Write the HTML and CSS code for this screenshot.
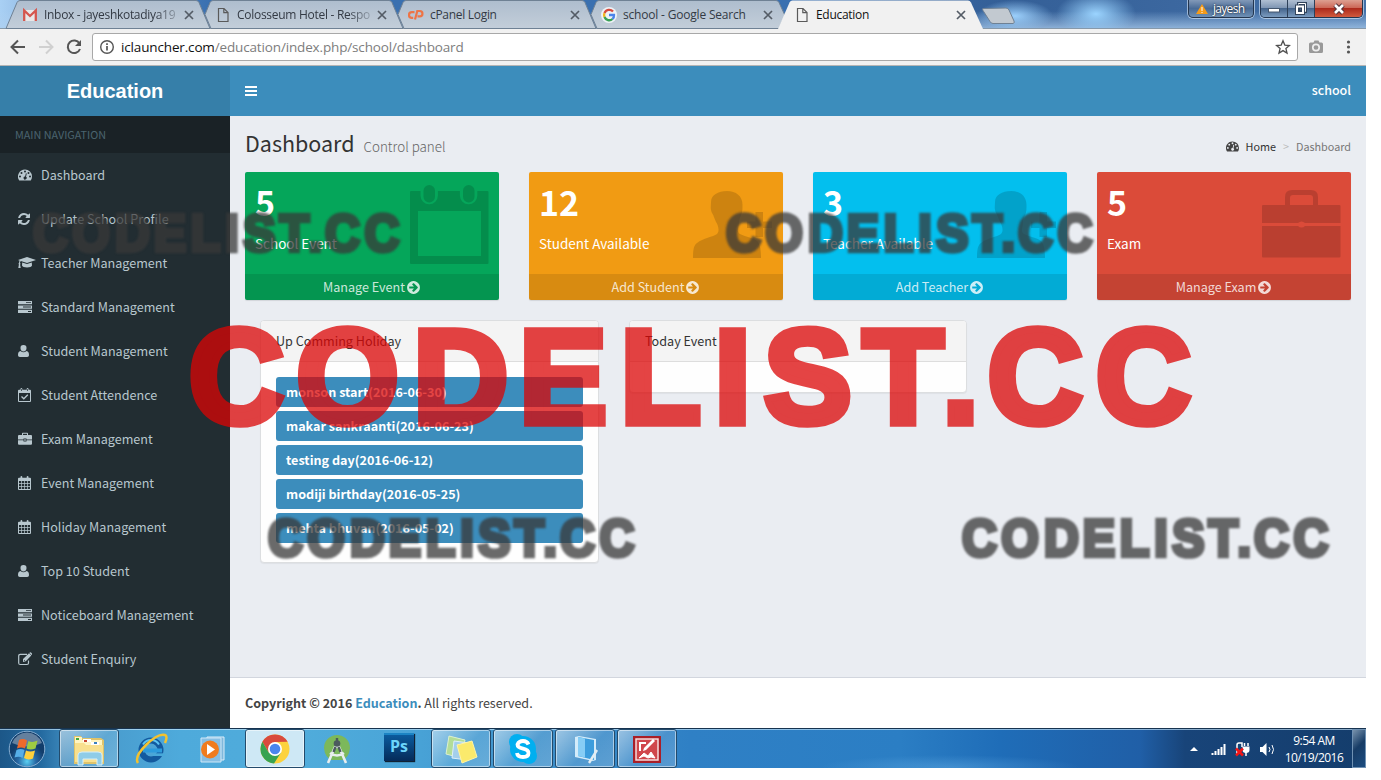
FILE: index.html
```html
<!DOCTYPE html>
<html lang="en">
<head>
<meta charset="utf-8">
<title>Education</title>
<link rel="stylesheet" href="styles.css">
</head>
<body>
<svg class="defs" width="0" height="0">
  <symbol id="gauge" viewBox="0 0 14 14"><path fill-rule="evenodd" d="M7 1.500a7 7 0 0 1 7 7c0 1.500-.4 2.700-1.100 3.800-.1.200-.3.200-.5.200H1.600c-.2 0-.4 0-.5-.2A7 7 0 0 1 7 1.500zM2 7.500a1 1 0 1 0 0 2 1 1 0 0 0 0-2zM3.500 4a1 1 0 1 0 0 2 1 1 0 0 0 0-2zM7 2.500a1 1 0 1 0 0 2 1 1 0 0 0 0-2zM10.500 4a1 1 0 1 0 0 2 1 1 0 0 0 0-2zM12 7.500a1 1 0 1 0 0 2 1 1 0 0 0 0-2zM7.900 5.200 7.100 8.500a1.500 1.500 0 1 0 .9.300l.8-3.300z"/></symbol>
  <symbol id="refresh" viewBox="0 0 1792 1792"><path d="M1639 1056q0 5-1 7-64 268-268 434.500t-478 166.500q-146 0-282.500-55t-243.500-157l-129 129q-19 19-45 19t-45-19-19-45v-448q0-26 19-45t45-19h448q26 0 45 19t19 45-19 45l-137 137q71 66 161 102t187 36q134 0 250-65t186-179q11-17 53-117 8-23 30-23h192q13 0 22.500 9.500t9.500 22.500zm25-800v448q0 26-19 45t-45 19h-448q-26 0-45-19t-19-45 19-45l138-138q-148-137-349-137-134 0-250 65t-186 179q-11 17-53 117-8 23-30 23h-199q-13 0-22.500-9.500t-9.500-22.500v-7q65-268 270-434.500t480-166.500q146 0 284 55.500t245 156.500l130-129q19-19 45-19t45 19 19 45z"/></symbol>
  <symbol id="cap" viewBox="0 0 18 14"><path d="M9 1 18 4 9 7 2.800 5C2.200 5.500 2 6.200 2 7c.8.500.6 1.300.1 1.600L2.700 12H.3l.6-3.400C.4 8.100.4 7.500 1 7.100c0-1 .2-1.800.7-2.400L0 4zM4.200 6.500 9 8.100l4.800-1.600.2 3c0 2.500-9.800 2.500-10 0z"/></symbol>
  <symbol id="server" viewBox="0 0 14 14"><path fill-rule="evenodd" d="M0 1h14v3.300H0zM0 5.400h14v3.300H0zM0 9.800h14v3.300H0zM8 2.200v.9h5v-.9zM5 6.600v.9h8v-.9zM10 11v.9h3V11z"/></symbol>
  <symbol id="user" viewBox="0 0 14 14"><path d="M5.500 1a3 3 0 0 1 3 3.200c0 1.800-1.100 3.300-3 3.300s-3-1.500-3-3.300A3 3 0 0 1 5.500 1zM2.500 7a4.500 4.500 0 0 0 6 0c1.800.2 2.500 2 2.500 4 0 1.200-.7 2-1.800 2H1.800C.7 13 0 12.200 0 11c0-2 .7-3.800 2.500-4z"/></symbol>
  <symbol id="calcheck" viewBox="0 0 14 14"><path fill-rule="evenodd" d="M1 1.800h1.500V1q0-.9.900-.9t.9.900v.8h4.400V1q0-.9.900-.9t.9.900v.8H12q1 0 1 1V13q0 1-1 1H1q-1 0-1-1V2.800q0-1 1-1zM1 5v8h11V5zM3.100 1v2.100h.7V1zM9.200 1v2.100h.7V1z"/><path d="m3.500 8.500 2.300 2.300 4-4" fill="none" stroke="currentColor" stroke-width="1.300"/></symbol>
  <symbol id="calendar" viewBox="0 0 14 14"><path fill-rule="evenodd" d="M1 1.800h1.500V1q0-.9.900-.9t.9.900v.8h4.400V1q0-.9.900-.9t.9.900v.8H12q1 0 1 1V13q0 1-1 1H1q-1 0-1-1V2.800q0-1 1-1zM1 5v2h2.200V5zm2.900 0v2h2.200V5zm2.900 0v2H9V5zm2.900 0v2H12V5zM1 7.700v2.300h2.200V7.700zm2.900 0v2.300h2.200V7.700zm2.900 0v2.300H9V7.700zm2.900 0v2.300H12V7.700zM1 10.800V13h2.200v-2.200zm2.900 0V13h2.200v-2.200zm2.900 0V13H9v-2.200zm2.900 0V13H12v-2.200z"/></symbol>
  <symbol id="case" viewBox="0 0 14 14"><path fill-rule="evenodd" d="M4 3V1.500q0-.8.800-.8h4.400q.8 0 .8.800V3h3q1 0 1 1v3.500H8.500v-1h-3v1H0V4q0-1 1-1zm1 0h4V1.700H5zM0 8.200h5.500v1.300h3V8.200H14v3.600q0 1-1 1H1q-1 0-1-1zM6.300 7.300h1.400v1.400H6.300z"/></symbol>
  <symbol id="edit" viewBox="0 0 14 14"><path d="M10.500 8.500V11q0 1.500-1.500 1.500H2.300Q.7 12.500.7 11V4Q.7 2.300 2.300 2.300H9" fill="none" stroke="currentColor" stroke-width="1.200"/><path fill-rule="evenodd" d="m11 1.200 2.300 2.300-5.500 5.700L5 10V7zm.8-.7q.6-.6 1.200 0l1 1q.6.600 0 1.200l-.4.400-2.200-2.200zM6 7.700V9h1.200z"/></symbol>
  <symbol id="go" viewBox="0 0 1792 1792"><path d="M1413 896q0-27-18-45l-91-91-362-362q-18-18-45-18t-45 18l-91 91q-18 18-18 45t18 45l189 189h-502q-26 0-45 19t-19 45v128q0 26 19 45t45 19h502l-189 189q-19 19-19 45t19 45l91 91q18 18 45 18t45-18l362-362 91-91q18-18 18-45zm251 0q0 209-103 385.500t-279.500 279.500-385.500 103-385.500-103-279.500-279.500-103-385.500 103-385.500 279.500-279.500 385.500-103 385.500 103 279.500 279.500 103 385.500z"/></symbol>
  <symbol id="close" viewBox="0 0 10 10"><path d="m1 1 8 8M9 1 1 9" stroke="currentColor" stroke-width="1.700" fill="none"/></symbol>
  <symbol id="page" viewBox="0 0 12 16"><path d="M1.500 1.500h5.500l4 4v9H1.500zM6.800 1.500v4.200H11" fill="none" stroke="#5a5a5a" stroke-width="1.200"/></symbol>
  <symbol id="personadd" viewBox="0 0 80 80"><path d="M34 7c9 0 15.500 5 15.500 14 0 4 0 6-1 9-1 3-2.500 5-2.500 8 0 6-3 9 1 12 6 3 14 4 17 7 3 3 4 8 4 17H0c0-9 1-13 4-15 6-5 16-6 20-9 3-3 1-9-1-12-2-4-2-6-4-9-2-5-1-7-1-11 0-7 7-11 16-11z"/><path d="M62.500 28h7.500v9.500h9V44h-9v9h-7.500v-9H54v-6.500h8.500z"/></symbol>
  <symbol id="word" viewBox="0 0 1010 110" overflow="visible"><text y="101" x="187.300 294.700 411.300 517.300 618.300 712.300 761.700 860.700 940 985.300 1093.300" transform="translate(-190 0)">CODELIST.CC</text></symbol>
  <linearGradient id="tabg" x2="0" y2="1"><stop stop-color="#aebdce"/><stop offset="1" stop-color="#c3ced9"/></linearGradient>
</svg>

<div class="screen">
  <div class="titlebar">
    <svg class="tabshapes" width="1030" height="29" viewBox="0 0 1030 29">
      <g fill="url(#tabg)" stroke="#6f8194">
        <path d="M6 28.500 17 2.500q1-2 3-2h176q2 0 3 2l11 26z"/>
        <path d="m211 28.500-6-14 5-12q1-2 3-2h176q2 0 3 2l11 26z"/>
        <path d="m404 28.500-6-14 5-12q1-2 3-2h176q2 0 3 2l11 26z"/>
        <path d="m597 28.500-6-14 5-12q1-2 3-2h177q2 0 3 2l6 13-6 13z"/>
        <path d="m983 8.500 23-.5q2 0 3 2l5 11q1 2-1 2.500h-20q-2 0-3-2l-7-11q-1-2 0-2z" fill="#c2c9d0"/>
      </g>
      <path d="M778 29 789.500 2.500q1-2 3-2H968q2 0 3 2L983 29z" fill="#f1f1f1"/>
    </svg>
    <div class="tabs">
      <div class="tab"><svg class="fav" viewBox="0 0 16 16"><path d="M2 3h12v11H2z" fill="#e8e8e8"/><path d="M2.200 14V3.500L8 9l5.800-5.500V14" fill="none" stroke="#d5564e" stroke-width="2.300"/></svg><span class="tname t1">Inbox - jayeshkotadiya19</span><svg class="x"><use href="#close"/></svg></div>
      <div class="tab"><svg class="fav"><use href="#page"/></svg><span class="tname t2">Colosseum Hotel - Respo</span><svg class="x"><use href="#close"/></svg></div>
      <div class="tab"><svg class="fav" viewBox="0 0 16 16"><path d="M6.500 5.200H3.800a2.700 2.700 0 0 0 0 5.600h1.400M7 12.500 9.300 4h2.500a2.600 2.600 0 0 1 0 5.300H9.500" fill="none" stroke="#ee7446" stroke-width="2.200"/></svg><span class="tname t3">cPanel Login</span><svg class="x"><use href="#close"/></svg></div>
      <div class="tab"><svg class="fav" viewBox="0 0 16 16"><circle cx="8" cy="8" r="8" fill="#eef2f6"/><g fill="none" stroke-width="2.300"><path d="M12 4.600A5 5 0 0 0 3.500 6" stroke="#d64b3e"/><path d="M3.500 6a5 5 0 0 0 0 4" stroke="#efb61f"/><path d="M3.500 10a5 5 0 0 0 8 2" stroke="#38a156"/><path d="M11.500 12A5 5 0 0 0 13 8H8" stroke="#4a83ea"/></g></svg><span class="tname t4">school - Google Search</span><svg class="x"><use href="#close"/></svg></div>
      <div class="tab"><svg class="fav"><use href="#page"/></svg><span class="tname t5">Education</span><svg class="x"><use href="#close"/></svg></div>
    </div>
    <div class="winbtns">
      <div class="profile"><svg width="12" height="12" viewBox="0 0 12 12"><path d="M6 1 12 11H0z" fill="#f69b18"/><path d="M6 4v4M6 9v1" stroke="#fff"/></svg><span>jayesh</span></div>
      <div class="ctl">
        <div class="cb"><svg width="14" height="14"><rect x="1.500" y="6.500" width="11" height="3.500" fill="#fff" stroke="#44566e"/></svg></div>
        <div class="cb"><svg width="14" height="14" fill="none"><path d="M4.500 1.500h7v8h-7z" stroke="#33455c" stroke-width="3"/><path d="M4.500 1.500h7v8h-7z" stroke="#fff"/><path d="M3 4.500h6v6.500H3z" stroke="#33455c" stroke-width="4"/><path d="M3 4.500h6v6.500H3z" stroke="#fff" stroke-width="2"/></svg></div>
        <div class="cb red"><svg width="14" height="14" viewBox="0 0 14 14"><path d="m3 3 8 8M11 3l-8 8" stroke="#51333b" stroke-width="4.600"/><path d="m3 3 8 8M11 3l-8 8" stroke="#fff" stroke-width="2.600"/></svg></div>
      </div>
    </div>
  </div>

  <div class="toolbar">
    <svg class="navicons" width="92" height="36" fill="none" stroke-width="2"><path d="M25 18H12M18 11.500 11.500 18l6.500 6.500" stroke="#555"/><path d="M39 18h13M46 11.500l6.500 6.500-6.500 6.500" stroke="#d0d0d0"/><path d="M79.500 14.500A6.300 6.300 0 1 0 80 20" stroke="#555"/><path d="M81 11v6h-6z" fill="#555"/></svg>
    <div class="omni">
      <svg width="16" height="16" viewBox="0 0 16 16"><circle cx="8" cy="8" r="6.300" fill="none" stroke="#555" stroke-width="1.400"/><path d="M8 7v4.500M8 4.300v1.600" stroke="#555" stroke-width="1.700"/></svg>
      <span class="url"><b>iclauncher.com</b>/education/index.php/school/dashboard</span>
      <svg class="star" width="16" height="16" viewBox="0 0 16 16"><path d="m8 1.800 1.800 4.300 4.600.4-3.500 3 1.100 4.600L8 11.600l-4 2.500 1.100-4.600-3.500-3 4.600-.4z" fill="none" stroke="#505050" stroke-width="1.300"/></svg>
    </div>
    <svg class="right" width="68" height="36"><path d="M12.500 13.500h3l1-2h4l1 2h2q1.500 0 1.500 1.500v7.500q0 1.500-1.500 1.500h-11Q11 24 11 22.500V15q0-1.500 1.500-1.500z" fill="#999"/><circle cx="18" cy="18.500" r="3.200" fill="none" stroke="#eee" stroke-width="1.700"/><g fill="#555"><circle cx="50.500" cy="13" r="1.600"/><circle cx="50.500" cy="18" r="1.600"/><circle cx="50.500" cy="23" r="1.600"/></g></svg>
  </div>

  <div class="app">
    <aside class="side">
      <div class="logo">Education</div>
      <div class="navhead">MAIN NAVIGATION</div>
      <div class="item"><svg><use href="#gauge"/></svg>Dashboard</div>
      <div class="item"><svg class="sm"><use href="#refresh"/></svg>Update School Profile</div>
      <div class="item"><svg class="wide"><use href="#cap"/></svg>Teacher Management</div>
      <div class="item"><svg><use href="#server"/></svg>Standard Management</div>
      <div class="item"><svg><use href="#user"/></svg>Student Management</div>
      <div class="item"><svg><use href="#calcheck"/></svg>Student Attendence</div>
      <div class="item"><svg><use href="#case"/></svg>Exam Management</div>
      <div class="item"><svg><use href="#calendar"/></svg>Event Management</div>
      <div class="item"><svg><use href="#calendar"/></svg>Holiday Management</div>
      <div class="item"><svg><use href="#user"/></svg>Top 10 Student</div>
      <div class="item"><svg><use href="#server"/></svg>Noticeboard Management</div>
      <div class="item"><svg><use href="#edit"/></svg>Student Enquiry</div>
    </aside>
    <main class="main">
      <header class="navbar"><svg width="12" height="12"><path d="M0 2h12M0 6h12M0 10h12" stroke="#fff" stroke-width="2"/></svg><span>school</span></header>
      <section class="content">
        <div class="heading">
          <div><span class="h1">Dashboard</span><span class="sub">Control panel</span></div>
          <div class="crumbs"><svg width="13" height="13"><use href="#gauge"/></svg><span class="home">Home</span><span class="sep">&gt;</span><span class="here">Dashboard</span></div>
        </div>
        <div class="boxes">
          <div class="box green"><div class="inner"><div class="num">5</div><div class="lbl">School Event</div></div>
            <svg class="big" width="80" height="80" viewBox="0 0 80 80"><path fill-rule="evenodd" d="M2 7h9.500v4.500a8.700 8.700 0 0 0 17.400 0V7h22v4.500a8.700 8.700 0 0 0 17.400 0V7H78.500q1 0 1 1v71q0 1-1 1H2q-1 0-1-1V8q0-1 1-1zM9 27v45h63V27z"/><rect x="14.500" y="1" width="11.500" height="17.500" rx="5.700"/><rect x="54" y="1" width="11.500" height="17.500" rx="5.700"/></svg>
            <div class="foot">Manage Event <svg><use href="#go"/></svg></div></div>
          <div class="box orange"><div class="inner"><div class="num">12</div><div class="lbl">Student Available</div></div>
            <svg class="big" width="80" height="80"><use href="#personadd"/></svg>
            <div class="foot">Add Student <svg><use href="#go"/></svg></div></div>
          <div class="box aqua"><div class="inner"><div class="num">3</div><div class="lbl">Teacher Available</div></div>
            <svg class="big" width="80" height="80"><use href="#personadd"/></svg>
            <div class="foot">Add Teacher <svg><use href="#go"/></svg></div></div>
          <div class="box redbox"><div class="inner"><div class="num">5</div><div class="lbl">Exam</div></div>
            <svg class="big" width="80" height="80"><path fill-rule="evenodd" d="M24 21v-8q0-7 7-7h19q7 0 7 7v8h21.500q1 0 1 1v17H44q-3.500-3-7 0H1V22q0-1 1-1zm5 0h23v-7q0-3-3-3H32q-3 0-3 3zM1 42h36q3.500 3 7 0h35.500v30.500q0 1-1 1H2q-1 0-1-1z"/></svg>
            <div class="foot">Manage Exam <svg><use href="#go"/></svg></div></div>
        </div>
        <div class="panels">
          <div class="panel"><div class="phead">Up Comming Holiday</div>
            <div class="pbody"><div class="ev">monson start(2016-06-30)</div><div class="ev">makar sankraanti(2016-06-23)</div><div class="ev">testing day(2016-06-12)</div><div class="ev">modiji birthday(2016-05-25)</div><div class="ev">mehta bhuvan(2016-05-02)</div></div></div>
          <div class="panel p2"><div class="phead">Today Event</div><div class="pbody"></div></div>
        </div>
      </section>
      <footer class="footer"><b>Copyright © 2016 <i>Education</i>.</b> All rights reserved.</footer>
    </main>
  </div>

  <div class="taskbar">
    <div class="start"><svg width="40" height="40" viewBox="0 0 40 40"><defs><radialGradient id="orb" cy=".85"><stop stop-color="#5bd0f2"/><stop offset=".5" stop-color="#2769a5"/><stop offset="1" stop-color="#123d6b"/></radialGradient></defs><circle cx="20" cy="20" r="17.800" fill="url(#orb)" stroke="#86add0"/><path d="M5 14a16 16 0 0 1 30 0q-15 7-30 0z" fill="#fff" opacity=".35"/><path d="M12 11q4-2 8 .5l-2 8q-4-2-8 0z" fill="#ef6a2c"/><path d="M21.500 12q4 2 9-.5l-2 8q-5 2-9 0z" fill="#9dcc42"/><path d="M9.500 21q4-2 8 0l-2 8q-3-2-8-.5z" fill="#56aee8"/><path d="M19 21.500q4 2 9 0l-2 8q-5 2-9-.5z" fill="#ffd03c"/></svg></div>
    <div class="task on"><svg width="36" height="36" viewBox="0 0 36 36"><path d="M3 5h7l1 2h19l3 2v24H3z" fill="#dfc36a"/><path d="M4 6h7v3h20v9H4z" fill="#fff5c3"/><path d="M12 8h8v3h-8zM20 11h8v3h-8z" fill="#fff"/><path d="M5 7h3v2H5z" fill="#3fa93d"/><path d="M13 9h3v2h-3z" fill="#c94831"/><path d="M23 11h3v2h-3z" fill="#3b80bd"/><path d="M4 12h9l2 2h17v17H4z" fill="#f8e08e"/><path d="M7 34V24q0-3 4-3h16q4 0 4 3v10h-5v-6H12v6z" fill="#8fcce8" stroke="#d5eefa"/></svg></div>
    <div class="task"><svg width="36" height="36" viewBox="0 0 36 36"><circle cx="18" cy="19" r="9.500" fill="none" stroke="#135a9f" stroke-width="6"/><path d="M10 13.500a9.500 9.500 0 0 1 16 0" fill="none" stroke="#5cc4f2" stroke-width="2"/><path d="M10 19.500h19" stroke="#2c9bdc" stroke-width="4"/><path d="M20 22.300h12v2.700H20z" fill="#48a8d9"/><path d="M5 32Q1 26 13 14T32 4q3 1 0 8" fill="none" stroke="#f2c230" stroke-width="2.500"/></svg></div>
    <div class="task"><svg width="36" height="36" viewBox="0 0 36 36"><path d="M12 6h17v23H12z" fill="#7fb8dc" stroke="#dceefa"/><path d="M6 7h20v24H6z" fill="#86bfe4" stroke="#cfe8f8"/><circle cx="15" cy="18.500" r="9" fill="#f07c1e"/><path d="m12 13 8 5.500-8 5.500z" fill="#fff"/></svg></div>
    <div class="task on hot"><svg width="36" height="36" viewBox="0 0 36 36"><circle cx="18" cy="18" r="14.500" fill="#fcd23d"/><path d="M5.400 10.800A14.500 14.500 0 0 1 30.600 10.800L18 11 11.700 21.500z" fill="#d94b3d"/><path d="M5.400 10.800A14.500 14.500 0 0 0 17 32.500l7-11h-12.300z" fill="#37a351"/><circle cx="18" cy="18" r="7" fill="#fff"/><circle cx="18" cy="18" r="5.300" fill="#4a86ef"/></svg></div>
    <div class="task"><svg width="36" height="36" viewBox="0 0 36 36"><path d="M5 17a13 13 0 0 1 26 0q-1 10-8 12H13Q6 27 5 17z" fill="#7cb85b"/><path d="m9 32 7-16h4l7 16M11 22q7 5 14 0" fill="none" stroke="#e9eeee" stroke-width="2.600"/><circle cx="18" cy="12.500" r="3.300" fill="#4c5a5e"/><path d="M18 7v4M16.500 16l-2 5M19.500 16l2 5" stroke="#4c5a5e" stroke-width="2.400"/></svg></div>
    <div class="task"><div class="ps">Ps</div></div>
    <div class="task on"><svg width="36" height="36" viewBox="0 0 36 36"><path d="m6 5 16 4-4 18L3 23z" fill="#b3dd98" stroke="#ddf1cf"/><path d="m11 10 15 2-2 17-15-2z" fill="#a4cfeb" stroke="#dcf0fa"/><path d="m14 14 15-4 5 16-15 6z" fill="#fbea6c" stroke="#fff4a6"/></svg></div>
    <div class="task on"><svg width="36" height="36" viewBox="0 0 36 36"><circle cx="18" cy="18" r="13" fill="#00aff0"/><circle cx="12" cy="11" r="8" fill="#00aff0"/><circle cx="24" cy="25" r="8" fill="#00aff0"/><path d="M23.500 13.500Q22 10 18 10t-5.500 3.500q0 3 5.500 4.200t5.500 4.300q0 4-5.500 4t-6-4" fill="none" stroke="#fff" stroke-width="3.800"/></svg></div>
    <div class="task on"><svg width="36" height="36" viewBox="0 0 36 36"><path d="m8 6 4-1 17 3v21l-3 1-18-4z" fill="#d4ecfa"/><path d="m11 6 16 3v20l-16-4z" fill="#3c9ddd"/><path d="m11 6 7 1.500v19L11 25z" fill="#86cdf5"/><path d="m30 19-8 13" stroke="#e3edf3" stroke-width="2.400"/></svg></div>
    <div class="task on"><svg width="36" height="36" viewBox="0 0 36 36"><path d="M4 5h28v27H4z" fill="#a91f28"/><path d="M7 8h22v21H7z" fill="#d0474c" stroke="#f5dcdc" stroke-width="1.500"/><path d="m26 10-9 9-3 1 1-3 9-9z" fill="#fff"/><path d="M10 11h7v2h-5v7h-2z" fill="#fff"/><path d="m10 27 5-5 4 3 3-4 4 6-4-1-3 1-4-2z" fill="#fff" stroke="#fff"/></svg></div>
    <div class="tray">
      <svg width="92" height="40" viewBox="0 0 92 40"><path d="m4 22 4-4 4 4z" fill="#fff"/><path d="M26.500 24v2M29.500 22v4M32.500 20v6M35.500 18v8M38.500 15v11" stroke="#fff" stroke-width="2"/><path d="M51 25V16q0-2 2-2h3v4" fill="none" stroke="#fff" stroke-width="1.500"/><path d="M56.500 17.500h7v3.500q0 3-3.500 3t-3.500-3z" fill="#fff"/><path d="M58.500 17v-3M62 17v-3M60 23v4" stroke="#fff" stroke-width="1.500"/><path d="m50 19.500 7 7m0-7-7 7" stroke="#f31414" stroke-width="2.500"/><path d="M74 18h2.500l4-4v13l-4-4H74z" fill="#fff"/><path d="M83 18q2 2.500 0 5M86 16q3 4.500 0 9" fill="none" stroke="#fff"/></svg>
      <div class="clock"><span>9:54 AM</span><span class="date">10/19/2016</span></div>
      <div class="peek"></div>
    </div>
  </div>

  <svg class="marks" width="1381" height="780">
    <g class="mgrey">
      <use href="#word" width="1010" height="110" transform="translate(34 212) scale(.366 .39)"/>
      <use href="#word" width="1010" height="110" transform="translate(727 212) scale(.366 .39)"/>
      <use href="#word" width="1010" height="110" transform="translate(269 516) scale(.366 .395)"/>
      <use href="#word" width="1010" height="110" transform="translate(963 516) scale(.366 .395)"/>
    </g>
    <g class="mred"><use href="#word" width="1010" height="110" transform="translate(191.500 321.500) scale(1.001 1.005)"/></g>
  </svg>
</div>
</body>
</html>
```
FILE: styles.css
```css
* { box-sizing: border-box; }
body { margin: 0; background: #fff; width: 1381px; height: 780px; overflow: hidden; font-family: "Noto Sans CJK SC", "Noto Sans", sans-serif; font-size: 12.6px; color: #333; }
.defs { position: absolute; }
svg { flex: none; }
.screen { position: relative; width: 1366px; height: 768px; display: flex; flex-direction: column; }

.titlebar { position: relative; height: 29px; flex: none; display: flex; justify-content: space-between; border-bottom: 1px solid #8799aa; background: radial-gradient(ellipse 38px 16px at 1015px 16px, #9bcffb, transparent), radial-gradient(ellipse 40px 22px at 1096px 14px, #9bd4ff, transparent), linear-gradient(180deg, transparent 40%, rgba(175, 208, 240, .7)), linear-gradient(90deg, #a9d0f4 0, #80a8d6 60px, #3a70b0 210px, #3a70b0 800px, #345f97 1000px, #4370a8 1366px); }
.tabshapes { position: absolute; left: 0; top: 0; }
.tabs { position: relative; display: flex; padding-left: 22px; font: 12px/28px "Open Sans", sans-serif; color: #333a44; }
.tab { width: 193px; height: 29px; display: flex; align-items: center; }
.fav { width: 16px; height: 16px; margin-right: 6px; }
.tab .x { width: 10px; height: 10px; margin-left: 5px; color: #545c66; }
.tname { width: 135px; flex: none; overflow: hidden; white-space: nowrap; line-height: 29px; }
.t1, .t2 { -webkit-mask-image: linear-gradient(90deg, #000 82%, rgba(0, 0, 0, .2)); mask-image: linear-gradient(90deg, #000 82%, rgba(0, 0, 0, .2)); }
.t1 { letter-spacing: -.3px; }
.t2 { letter-spacing: -.28px; }
.t3 { letter-spacing: -.3px; }
.t4 { letter-spacing: -.19px; }
.t5 { letter-spacing: -.3px; color: #111; }
.winbtns { position: relative; display: flex; align-items: flex-start; padding-right: 3px; gap: 6px; }
.profile { width: 66px; height: 18px; border: 1px solid #24364f; border-top: 0; border-radius: 0 0 5px 5px; box-shadow: 0 0 0 1px rgba(220, 235, 250, .6); background: linear-gradient(#8299b8, #496b96 50%, #6f90b5); display: flex; align-items: center; gap: 5px; padding-left: 7px; font: 12px/16px "Open Sans", sans-serif; color: #fff; letter-spacing: -.7px; text-shadow: 0 0 2px #000; }
.ctl { display: flex; height: 18px; width: 103px; border: 1px solid #24364f; border-top: 0; border-radius: 0 0 5px 5px; box-shadow: 0 0 0 1px rgba(220, 235, 250, .6); overflow: hidden; }
.cb { width: 27px; display: flex; align-items: center; justify-content: center; border-right: 1px solid #2d4059; background: linear-gradient(#b0bfd2, #7d94b2 48%, #45648c 50%, #7b9cc0); }
.cb.red { flex: 1; border: 0; background: linear-gradient(#dda091, #cb6554 48%, #ad2b1c 50%, #d15a3e); }

.toolbar { height: 37px; flex: none; display: flex; align-items: flex-start; background: #f1f1f1; border-bottom: 1px solid #b5b5b5; }
.omni { width: 1206px; height: 28px; margin-top: 4px; background: #fff; border: 1px solid #a8a8a8; border-radius: 3px; display: flex; align-items: center; padding: 0 6px; font: 13.5px/26px "Open Sans", sans-serif; color: #7d7d7d; }
.omni b { font-weight: 400; color: #111; }
.url { margin-left: 6px; flex: 1; letter-spacing: -.15px; }

.app { height: 662px; flex: none; display: flex; }
.side { width: 230px; background: #222d32; color: #b8c7ce; }
.logo { height: 50px; background: #367fa9; color: #fff; text-align: center; font: bold 20px/50px "Liberation Sans", Arial, sans-serif; }
.navhead { height: 37px; background: #1a2226; color: #4b646f; font-size: 10.800px; line-height: 37px; padding-left: 15px; }
.item { height: 44px; display: flex; align-items: center; padding-left: 18px; line-height: 44px; }
.item svg { width: 14px; height: 14px; margin-right: 9px; fill: currentColor; }
.item svg.wide { width: 18px; margin-right: 5px; }
.item svg.sm { margin-left: -1px; margin-right: 10px; }
.main { width: 1136px; display: flex; flex-direction: column; }
.navbar { height: 50px; background: #3c8dbc; color: #fff; display: flex; align-items: center; justify-content: space-between; padding: 0 15px; }
.navbar span { line-height: 20px; padding-bottom: 2px; font-weight: 500; font-size: 12.500px; }
.content { flex: 1; background: #eaedf2; padding: 0 15px; }
.heading { height: 56px; display: flex; justify-content: space-between; align-items: flex-start; white-space: nowrap; }
.h1 { font-size: 21.5px; line-height: 54px; }
.sub { font-size: 13.400px; font-weight: 300; color: #666; margin-left: 9px; }
.crumbs { display: flex; align-items: center; font-size: 10.800px; line-height: 20px; padding-top: 20px; color: #444; }
.crumbs svg { fill: #444; }
.home { margin-left: 7px; color: #333; }
.sep { color: #bbb; margin: 0 7px; }
.here { color: #777; }
.boxes { display: flex; gap: 30px; color: #fff; }
.box { position: relative; width: 254px; height: 128px; border-radius: 2px; overflow: hidden; box-shadow: 0 1px 1px rgba(0, 0, 0, .1); display: flex; flex-direction: column; }
.green { background: #05a65a; }
.orange { background: #f19b13; }
.aqua { background: #03bfee; }
.redbox { background: #db4b39; }
.inner { height: 102px; padding: 10px; }
.num { font-size: 34px; font-weight: 700; line-height: 40px; }
.lbl { font-size: 13.500px; line-height: 20px; margin-top: 11px; }
.big { position: absolute; right: 10px; top: 12px; fill: rgba(0, 0, 0, .15); }
.foot { height: 26px; line-height: 26px; background: rgba(0, 0, 0, .1); color: rgba(255, 255, 255, .8); display: flex; justify-content: center; align-items: center; gap: 1px; }
.foot svg { width: 15px; height: 15px; fill: currentColor; }
.panels { display: flex; gap: 30px; align-items: flex-start; padding: 20px 15px 0; }
.panel { width: 339px; height: 243px; background: #fefefe; border: 1px solid #dcdee0; border-radius: 4px; box-shadow: 0 1px 1px rgba(0, 0, 0, .05); }
.p2 { height: 73px; width: 338px; }
.phead { height: 41px; line-height: 39px; background: #f4f4f4; border-bottom: 1px solid #ddd; padding-left: 15px; border-radius: 3px 3px 0 0; }
.pbody { padding: 15px; display: flex; flex-direction: column; gap: 4px; }
.ev { height: 30px; line-height: 30px; background: #3c8dbc; border-radius: 3px; color: #fff; font-weight: 700; padding-left: 10px; font-size: 12.6px; }
.footer { height: 51px; background: #fff; border-top: 1px solid #d2d6de; line-height: 50px; padding-left: 15px; color: #444; font-size: 12.56px; }
.footer i { font-style: normal; color: #3c8dbc; }

.taskbar { height: 40px; flex: none; display: flex; border-top: 1px solid #17334f; box-shadow: inset 0 1px 0 rgba(200, 230, 250, .65); background: radial-gradient(ellipse 130px 12px at 950px 38px, rgba(120, 190, 240, .35), transparent), linear-gradient(90deg, #1c5788 0, #23699f 40px, #4796c8 75px, #4eaadb 180px, #50acdb 300px, #4aa5d8 400px, #3b8dc9 560px, #2f80c5 690px, #2b7ec4 900px, #1f6db8 1000px, #205fa7 1140px, #184479 1185px, #143d6c 1366px); }
.start { width: 54px; height: 39px; padding-left: 7px; margin-right: 5px; }
.task { width: 60px; height: 39px; margin-right: 2px; display: flex; align-items: center; justify-content: center; }
.on { border: 1px solid #234b6c; border-radius: 3px; background: linear-gradient(135deg, rgba(255, 255, 255, .5), rgba(255, 255, 255, .12) 55%, rgba(255, 255, 255, .2)); box-shadow: inset 0 0 0 1px rgba(255, 255, 255, .5); }
.hot { background: rgba(255, 255, 255, .72); }
.ps { width: 30px; height: 28px; margin-bottom: 3px; background: linear-gradient(#0b5b9d, #052b59); border-top: 2px solid #1b84c4; color: #6cd4fa; font: bold 16px/23px "Open Sans", sans-serif; text-align: center; box-shadow: 1px 1px 1px #123; }
.tray { margin-left: auto; display: flex; color: #fff; }
.tray svg { margin-right: -2px; margin-left: -2px; }
.clock { width: 76px; display: flex; flex-direction: column; text-align: center; font: 12px/16px "Open Sans", sans-serif; padding-top: 4px; letter-spacing: -.5px; }
.date { padding-top: 1px; }
.peek { width: 14px; height: 39px; border: 1px solid #6f91b3; background: linear-gradient(135deg, #7892ac, #173c66 45%, #1c4c80); }

.marks { position: absolute; left: 0; top: 0; }
.marks text, #word text { font: bold 132px "Liberation Sans", Arial, sans-serif; }
.mred { opacity: .74; fill: #dc0404; stroke: #dc0404; stroke-width: 7.5px; filter: blur(.5px); }
.mgrey { opacity: .75; fill: #393939; stroke: #393939; stroke-width: 12px; filter: blur(1px); }
```
